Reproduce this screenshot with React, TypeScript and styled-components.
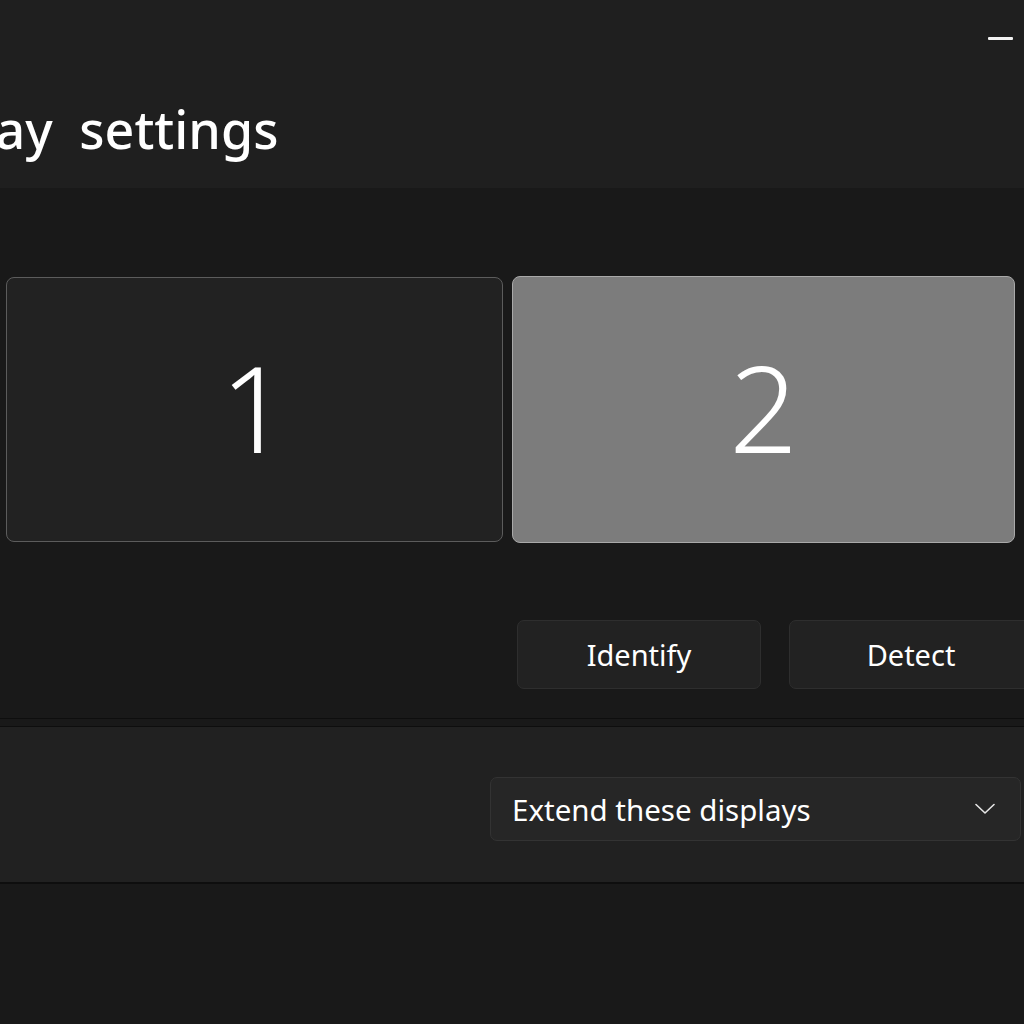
import styled, { createGlobalStyle } from "styled-components";

const GlobalStyle = createGlobalStyle`
	html, body {
		margin: 0;
		padding: 0;
		background: #191919;
	}
	* {
		box-sizing: border-box;
	}
`;

const Window = styled.div`
	width: 1024px;
	height: 1024px;
	overflow: hidden;
	background: #191919;
	font-family: "Noto Sans", "Open Sans", sans-serif;
	color: #ffffff;
	display: flex;
	flex-direction: column;
`;

const Header = styled.header`
	height: 188px;
	background: #1f1f1f;
	display: flex;
	flex-direction: column;
	overflow: hidden;
`;

const TitleBar = styled.div`
	height: 97px;
	display: flex;
	justify-content: flex-end;
	padding: 37px 11px 0 0;
`;

const Minimize = styled.span`
	width: 25px;
	height: 3px;
	border-radius: 1px;
	background: #f2f2f2;
`;

const Title = styled.h1`
	margin: 0 0 0 -128px;
	font-size: 52px;
	font-weight: 500;
	line-height: 64px;
	word-spacing: 13px;
	white-space: nowrap;
`;

const Arrangement = styled.section`
	height: 531px;
	border-bottom: 1px solid #0e0e0e;
	display: flex;
	flex-direction: column;
	padding: 88px 0 0 6px;
`;

const Monitors = styled.div`
	display: flex;
	align-items: center;
	gap: 9px;
	height: 267px;
`;

const Monitor = styled.div<{ $selected?: boolean }>`
	width: ${(p) => (p.$selected ? "503px" : "497px")};
	height: ${(p) => (p.$selected ? "267px" : "265px")};
	border-radius: 8px;
	border: 1px solid ${(p) => (p.$selected ? "#a9a9a9" : "#5c5c5c")};
	background: ${(p) => (p.$selected ? "#7c7c7c" : "#222222")};
	display: flex;
	align-items: center;
	justify-content: center;
	padding-bottom: 6px;
	font-size: 120px;
	font-weight: 300;
	line-height: 1;
	color: #ffffff;
`;

const Actions = styled.div`
	display: flex;
	gap: 28px;
	margin-top: 77px;
	padding-left: 511px;
`;

const Button = styled.button<{ $width: number }>`
	flex: none;
	width: ${(p) => p.$width}px;
	height: 69px;
	border-radius: 7px;
	border: 1px solid #2e2e2e;
	background: #222222;
	color: #ffffff;
	font-family: inherit;
	font-size: 29px;
	padding: 0;
`;

const Card = styled.section`
	margin-top: 7px;
	height: 158px;
	background: #212121;
	border-top: 1px solid #0e0e0e;
	border-bottom: 2px solid #0e0e0e;
	display: flex;
	justify-content: flex-end;
	padding: 50px 3px 0 0;
`;

const Dropdown = styled.div`
	width: 531px;
	height: 64px;
	border-radius: 7px;
	border: 1px solid #333333;
	background: #262626;
	display: flex;
	align-items: center;
	justify-content: space-between;
	padding: 0 25px 0 21px;
	font-size: 29.5px;
`;

const Chevron = () => (
	<svg width="20" height="12" viewBox="0 0 20 12" fill="none">
		<path d="M1 1.5 L10 10 L19 1.5" stroke="#e6e6e6" strokeWidth="1.6" strokeLinecap="round" strokeLinejoin="round" />
	</svg>
);

const App = () => {
	return (
		<>
			<GlobalStyle />
			<Window>
				<Header>
					<TitleBar>
						<Minimize />
					</TitleBar>
					<Title>Display settings</Title>
				</Header>

				<Arrangement>
					<Monitors>
						<Monitor>1</Monitor>
						<Monitor $selected>2</Monitor>
					</Monitors>
					<Actions>
						<Button $width={244}>Identify</Button>
						<Button $width={244}>Detect</Button>
					</Actions>
				</Arrangement>

				<Card>
					<Dropdown>
						<span>Extend these displays</span>
						<Chevron />
					</Dropdown>
				</Card>
			</Window>
		</>
	);
};

export default App;
